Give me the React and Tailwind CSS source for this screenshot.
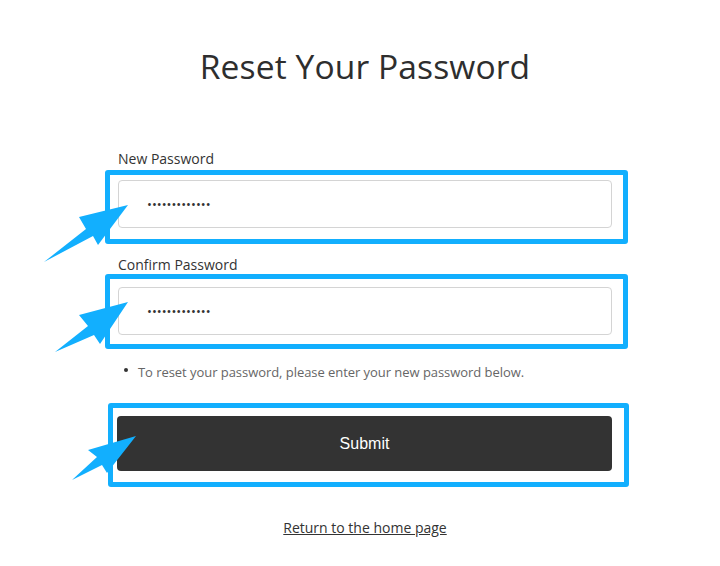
import { useState } from "react";

const BLUE = "#12affe";

function Arrows() {
  // annotation arrows drawn over the form
  return (
    <svg
      className="absolute left-0 top-0 pointer-events-none"
      width="720"
      height="566"
      viewBox="0 0 720 566"
    >
      <polygon fill={BLUE} points="44,262 86,229 79,217 128,205 98,245 93,236" />
      <polygon fill={BLUE} points="55,352 88,326 79,315 128,302 100,344 94,335" />
      <polygon fill={BLUE} points="72,480 97,457 88,450 136,436 107,473 102,465" />
    </svg>
  );
}

export default function App() {
  const [pw, setPw] = useState("abcdefghijklm");
  const [confirm, setConfirm] = useState("abcdefghijklm");

  return (
    <div className="relative w-full min-h-[566px] bg-white text-[#333] font-['Open_Sans',sans-serif]">
      <div className="ml-[105px] w-[524px] flex flex-col pt-[46px]">
        <h1 className="pl-[13px] pr-[17px] text-center text-[33.6px] leading-[40px] font-normal tracking-[0.1px] text-[#2e2e2e]">
          Reset Your Password
        </h1>

        <form onSubmit={(e) => e.preventDefault()} className="flex flex-col mt-[64px]">
          <label htmlFor="new-password" className="pl-[13px] text-[14px] leading-[18px] mb-[2px]">
            New Password
          </label>
          <div className="w-[523px] border-[5px] border-[#12affe] rounded-[3px] pl-[8px] pr-[11px] pt-[5px] pb-[11px]">
            <input
              id="new-password"
              type="password"
              value={pw}
              onChange={(e) => setPw(e.target.value)}
              className="block w-[494px] h-[48px] border border-[#d4d4d4] rounded-[4px] pl-[28px] text-[13px] text-[#333] outline-none"
            />
          </div>

          <label htmlFor="confirm-password" className="pl-[13px] mt-[12px] text-[14px] leading-[18px]">
            Confirm Password
          </label>
          <div className="w-[523px] border-[5px] border-[#12affe] rounded-[3px] pl-[8px] pr-[11px] pt-[8px] pb-[9px]">
            <input
              id="confirm-password"
              type="password"
              value={confirm}
              onChange={(e) => setConfirm(e.target.value)}
              className="block w-[494px] h-[48px] border border-[#d4d4d4] rounded-[4px] pl-[28px] text-[13px] text-[#333] outline-none"
            />
          </div>

          <div className="mt-[14px] pl-[19px] flex items-center gap-[10px] text-[13px] leading-[18px] tracking-[-0.05px] text-[#666]">
            <span className="w-[4px] h-[4px] rounded-full bg-[#333] -mt-[4px]" />
            <span>To reset your password, please enter your new password below.</span>
          </div>

          <div className="mt-[22px] ml-[3px] w-[521px] border-[5px] border-[#12affe] rounded-[3px] pl-[4px] pr-[12px] pt-[8px] pb-[11px]">
            <button
              type="submit"
              className="block w-[495px] h-[55px] bg-[#333] rounded-[4px] text-white text-[16px] font-['Liberation_Sans',Arial,sans-serif]"
            >
              Submit
            </button>
          </div>
        </form>

        <div className="pl-[13px] pr-[17px] mt-[32px] text-center text-[14px] leading-[18px]">
          <a href="#" className="underline text-[#333]">
            Return to the home page
          </a>
        </div>
      </div>
      <Arrows />
    </div>
  );
}
